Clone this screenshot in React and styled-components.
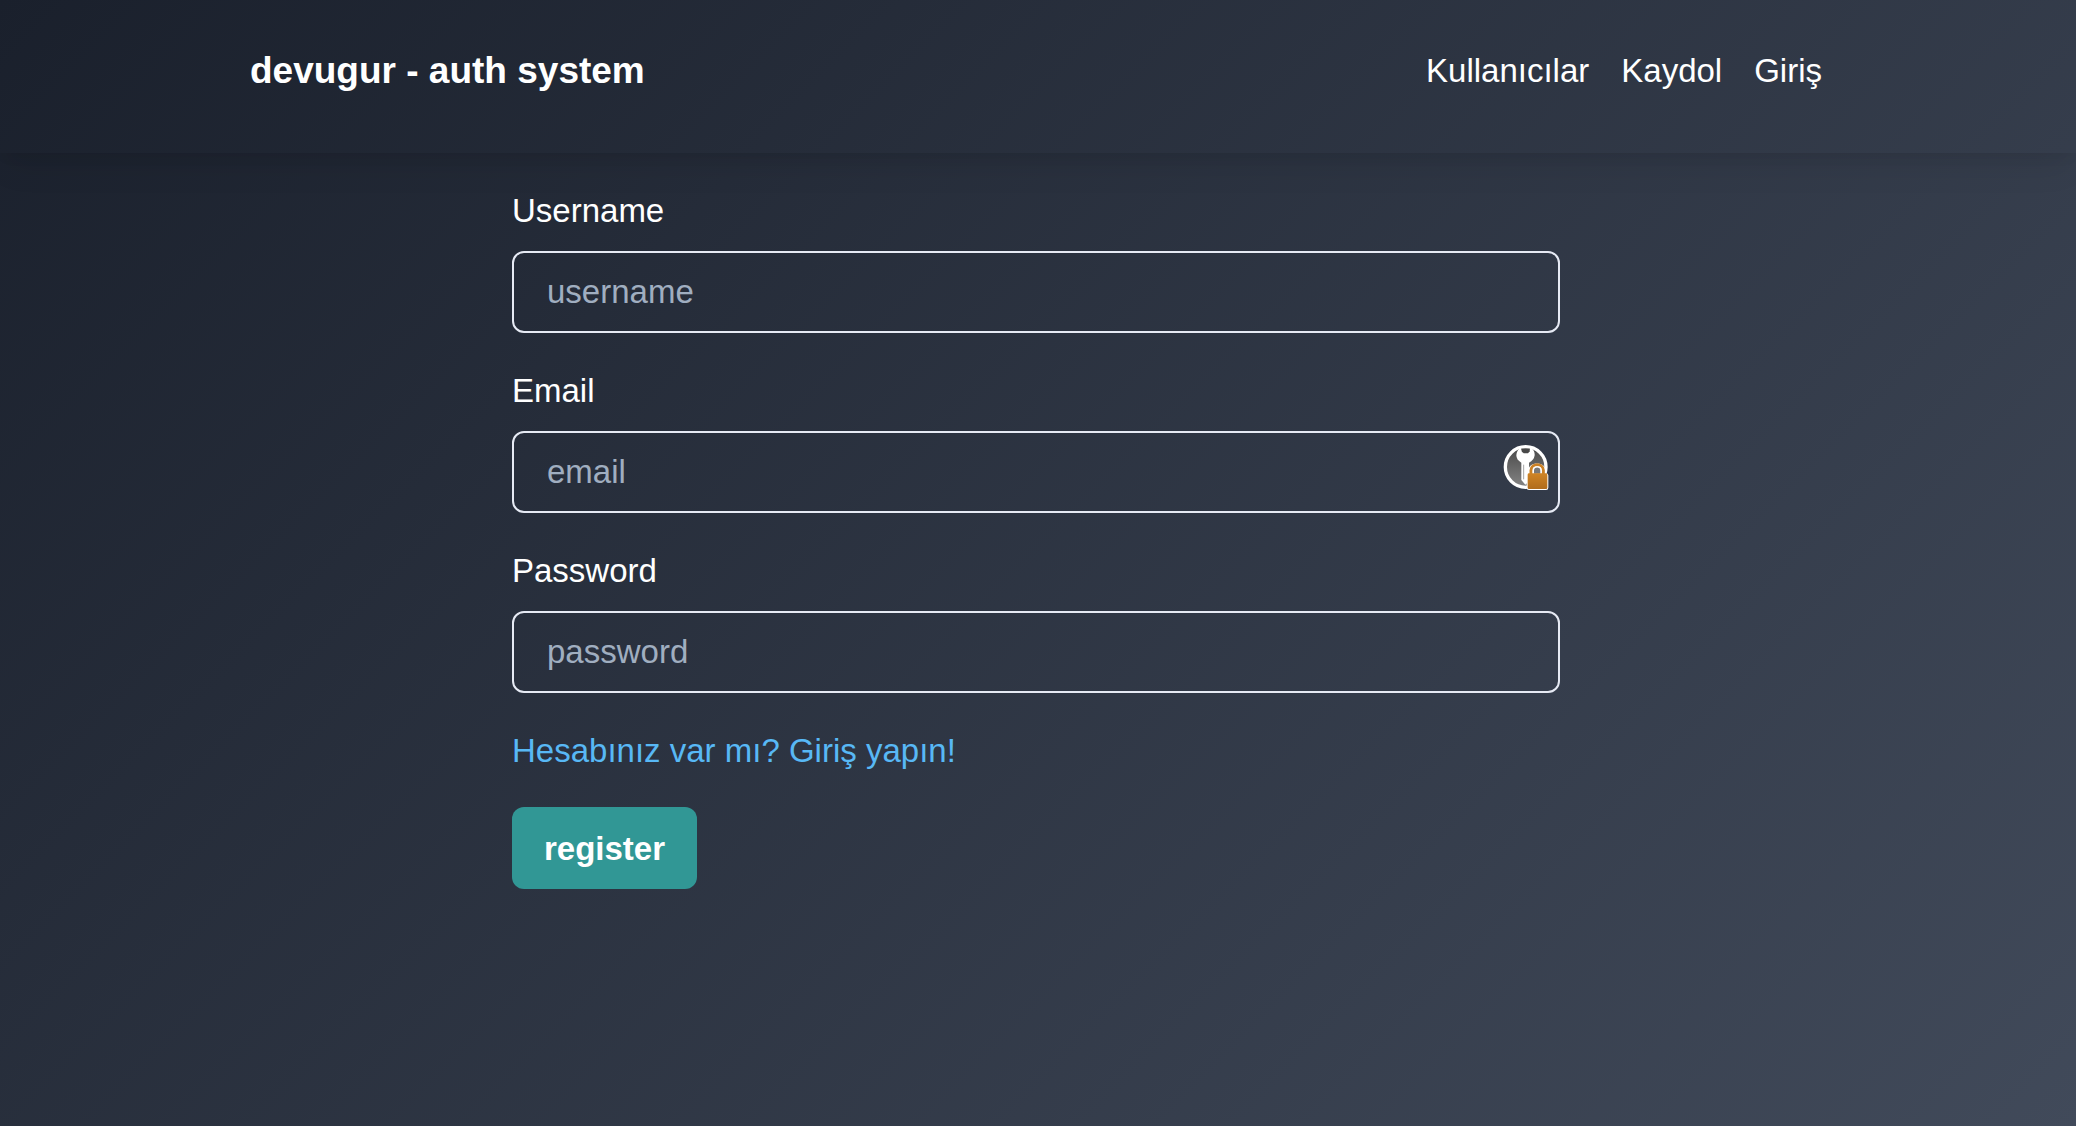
import React from "react";
import styled, { createGlobalStyle } from "styled-components";

const GlobalStyle = createGlobalStyle`
  *, *::before, *::after { box-sizing: border-box; }
  body {
    margin: 0;
    min-height: 100vh;
    background: linear-gradient(135deg, #1a202c, #414a5a) no-repeat;
    color: #ffffff;
    font-family: "Liberation Sans", Arial, sans-serif;
    font-size: 33px;
    line-height: 49px;
  }
`;

const Header = styled.header`
  padding: 46px 4px 58px 0;
  box-shadow: 0 20px 30px -6px rgba(0, 0, 0, 0.08), 0 8px 12px -4px rgba(0, 0, 0, 0.05);
`;

const Bar = styled.div`
  display: flex;
  align-items: center;
  justify-content: space-between;
  max-width: 1572px;
  margin: 0 auto;
`;

const Brand = styled.a`
  color: inherit;
  font-size: 37px;
  font-weight: 700;
  text-decoration: none;
`;

const Nav = styled.nav`
  display: flex;
  gap: 32px;
`;

const NavLink = styled.a`
  color: inherit;
  text-decoration: none;
`;

const Main = styled.main`
  padding: 33px 4px 33px 0;
`;

const Form = styled.form`
  display: flex;
  flex-direction: column;
  align-items: flex-start;
  max-width: 1048px;
  margin: 0 auto;
`;

const Field = styled.div`
  width: 100%;
  margin-bottom: 33px;
`;

const Label = styled.label`
  display: block;
  margin-bottom: 16px;
`;

const Control = styled.div`
  position: relative;
`;

const Input = styled.input`
  display: block;
  width: 100%;
  height: 82px;
  padding: 0 33px;
  border: 2px solid #e6eaf4;
  border-radius: 12px;
  background: transparent;
  color: inherit;
  font: inherit;
  &::placeholder { color: #a0aec0; opacity: 1; }
`;

const KeyBadge = styled.svg`
  position: absolute;
  top: 13px;
  right: 10px;
  width: 48px;
  height: 48px;
`;

const LoginLink = styled.a`
  color: #58b8f5;
  text-decoration: none;
`;

const Submit = styled.button`
  height: 82px;
  margin-top: 32px;
  padding: 0 32px;
  border: 0;
  border-radius: 12px;
  background: #319795;
  color: #ffffff;
  font: inherit;
  font-weight: 700;
`;

const fields = [
  { id: "username", label: "Username", type: "text" },
  { id: "email", label: "Email", type: "email", badge: true },
  { id: "password", label: "Password", type: "password" },
];

function KeyLock() {
  return (
    <KeyBadge viewBox="36 42 144 144" aria-hidden="true">
      <defs>
        <linearGradient id="disc" x1="0" y1="0" x2="0" y2="1">
          <stop offset="0" stopColor="#484848" />
          <stop offset="1" stopColor="#858585" />
        </linearGradient>
        <linearGradient id="lock" x1="0" y1="0" x2="0" y2="1">
          <stop offset="0" stopColor="#cf8425" />
          <stop offset="1" stopColor="#b06c1c" />
        </linearGradient>
      </defs>
      <circle cx="107" cy="111" r="61" fill="url(#disc)" stroke="#fff" strokeWidth="10" />
      <path d="M92 52 L96 67 H116 L121 52 Q135 61 134 76 Q132 91 117 98 V154 L106 164 L94 150 V98 Q79 90 79 76 Q80 61 92 52Z" fill="#fff" />
      <path d="M96 57 H119 V64 L114 70 H101 L96 64Z" fill="#484848" />
      <path d="M101 104 V148" stroke="#a5a5a5" strokeWidth="3" />
      <path d="M115 130 V122 C115 93 167 93 167 122 V130 Q175 130 175 136 V173 Q175 180 168 180 H117 Q110 180 110 173 V136 Q110 130 115 130Z" fill="#fff" />
      <path d="M123 133 V121 C123 99 160 99 160 121 V133" fill="none" stroke="#cb8125" strokeWidth="9" />
      <path d="M130 133 V122 C130 107 153 107 153 122 V133Z" fill="#777" stroke="#fff" strokeWidth="4" />
      <rect x="113" y="130" width="59" height="47" rx="4" fill="url(#lock)" />
    </KeyBadge>
  );
}

export default function App() {
  return (
    <>
      <GlobalStyle />
      <Header>
        <Bar>
          <Brand href="#home">devugur - auth system</Brand>
          <Nav>
            <NavLink href="#users">Kullanıcılar</NavLink>
            <NavLink href="#register">Kaydol</NavLink>
            <NavLink href="#login">Giriş</NavLink>
          </Nav>
        </Bar>
      </Header>
      <Main>
        <Form>
          {fields.map(({ id, label, type, badge }) => (
            <Field key={id}>
              <Label htmlFor={id}>{label}</Label>
              <Control>
                <Input id={id} type={type} placeholder={id} />
                {badge && <KeyLock />}
              </Control>
            </Field>
          ))}
          <LoginLink href="#login">Hesabınız var mı? Giriş yapın!</LoginLink>
          <Submit type="button">register</Submit>
        </Form>
      </Main>
    </>
  );
}
